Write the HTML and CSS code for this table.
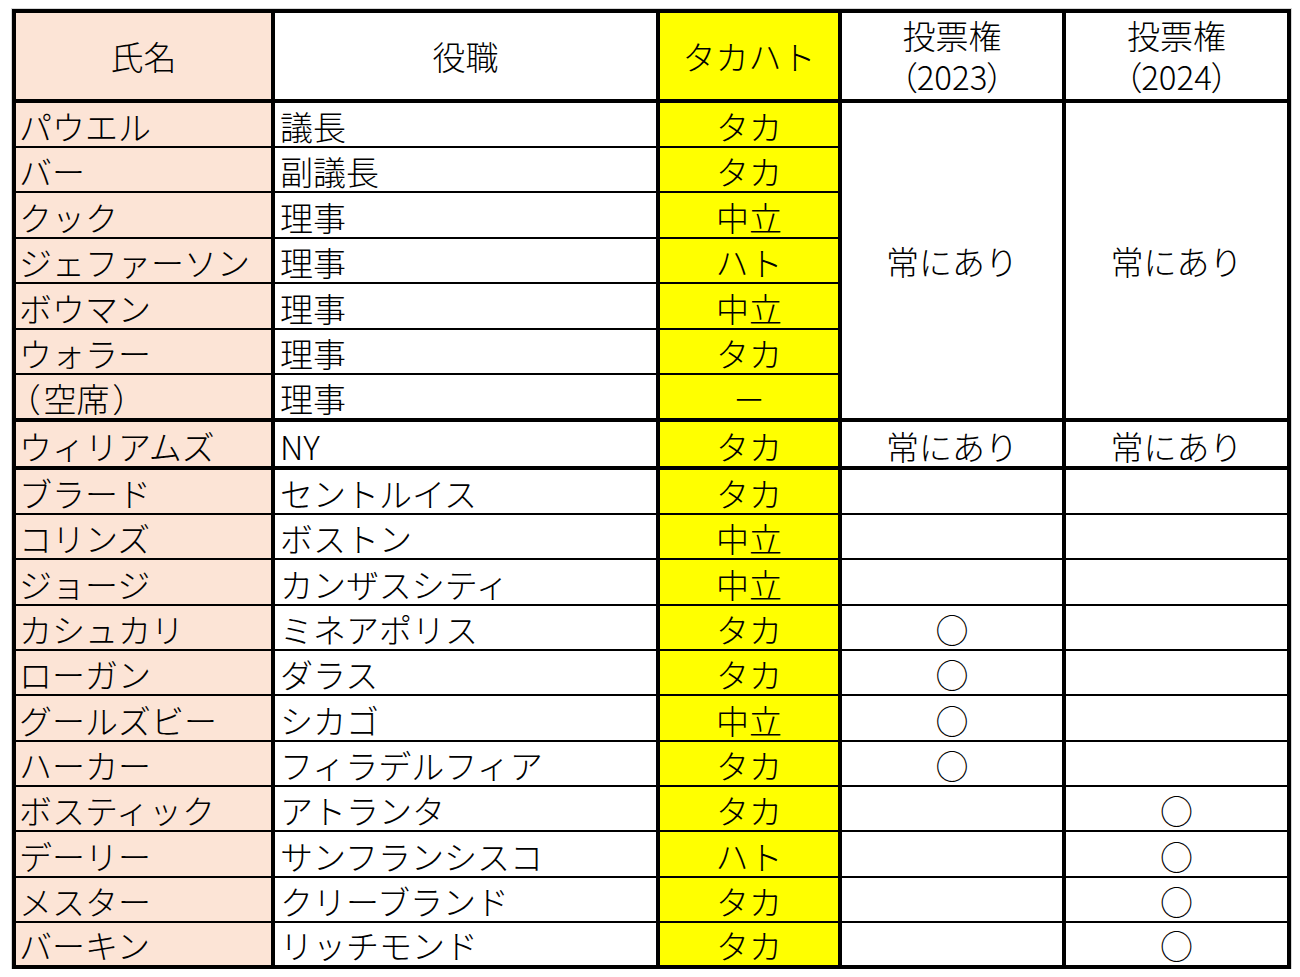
FILE: index.html
```html
<!DOCTYPE html>
<html lang="ja">
<head>
<meta charset="utf-8">
<title>FOMC</title>
<link rel="stylesheet" href="styles.css">
</head>
<body>
<div class="sheet">
  <div class="grid">
    <div class="cell name head">氏名</div>
    <div class="cell role head">役職</div>
    <div class="cell stance head">タカハト</div>
    <div class="cell vote head"><span>投票権</span><span><span class="p">（</span>2023<span class="p">）</span></span></div>
    <div class="cell vote head"><span>投票権</span><span><span class="p">（</span>2024<span class="p">）</span></span></div>

    <div class="cell name">パウエル</div>
    <div class="cell role">議長</div>
    <div class="cell stance">タカ</div>
    <div class="cell vote merged">常にあり</div>
    <div class="cell vote merged">常にあり</div>

    <div class="cell name">バー</div>
    <div class="cell role">副議長</div>
    <div class="cell stance">タカ</div>

    <div class="cell name">クック</div>
    <div class="cell role">理事</div>
    <div class="cell stance">中立</div>

    <div class="cell name">ジェファーソン</div>
    <div class="cell role">理事</div>
    <div class="cell stance">ハト</div>

    <div class="cell name">ボウマン</div>
    <div class="cell role">理事</div>
    <div class="cell stance">中立</div>

    <div class="cell name">ウォラー</div>
    <div class="cell role">理事</div>
    <div class="cell stance">タカ</div>

    <div class="cell name end"><span class="p wide">（</span>空席<span class="p wide">）</span></div>
    <div class="cell role end">理事</div>
    <div class="cell stance end">－</div>

    <div class="cell name end">ウィリアムズ</div>
    <div class="cell role end">NY</div>
    <div class="cell stance end">タカ</div>
    <div class="cell vote end">常にあり</div>
    <div class="cell vote end">常にあり</div>

    <div class="cell name">ブラード</div>
    <div class="cell role">セントルイス</div>
    <div class="cell stance">タカ</div>
    <div class="cell vote"></div>
    <div class="cell vote"></div>

    <div class="cell name">コリンズ</div>
    <div class="cell role">ボストン</div>
    <div class="cell stance">中立</div>
    <div class="cell vote"></div>
    <div class="cell vote"></div>

    <div class="cell name">ジョージ</div>
    <div class="cell role">カンザスシティ</div>
    <div class="cell stance">中立</div>
    <div class="cell vote"></div>
    <div class="cell vote"></div>

    <div class="cell name">カシュカリ</div>
    <div class="cell role">ミネアポリス</div>
    <div class="cell stance">タカ</div>
    <div class="cell vote">○</div>
    <div class="cell vote"></div>

    <div class="cell name">ローガン</div>
    <div class="cell role">ダラス</div>
    <div class="cell stance">タカ</div>
    <div class="cell vote">○</div>
    <div class="cell vote"></div>

    <div class="cell name">グールズビー</div>
    <div class="cell role">シカゴ</div>
    <div class="cell stance">中立</div>
    <div class="cell vote">○</div>
    <div class="cell vote"></div>

    <div class="cell name">ハーカー</div>
    <div class="cell role">フィラデルフィア</div>
    <div class="cell stance">タカ</div>
    <div class="cell vote">○</div>
    <div class="cell vote"></div>

    <div class="cell name">ボスティック</div>
    <div class="cell role">アトランタ</div>
    <div class="cell stance">タカ</div>
    <div class="cell vote"></div>
    <div class="cell vote">○</div>

    <div class="cell name">デーリー</div>
    <div class="cell role">サンフランシスコ</div>
    <div class="cell stance">ハト</div>
    <div class="cell vote"></div>
    <div class="cell vote">○</div>

    <div class="cell name">メスター</div>
    <div class="cell role">クリーブランド</div>
    <div class="cell stance">タカ</div>
    <div class="cell vote"></div>
    <div class="cell vote">○</div>

    <div class="cell name last">バーキン</div>
    <div class="cell role last">リッチモンド</div>
    <div class="cell stance last">タカ</div>
    <div class="cell vote last"></div>
    <div class="cell vote last">○</div>
  </div>
</div>
</body>
</html>
```

FILE: styles.css
```css
html, body {
  margin: 0;
  padding: 0;
  background: #ffffff;
}

body {
  font-family: "Noto Sans CJK JP", "Noto Sans", sans-serif;
  font-size: 33px;
  color: #000000;
}

.sheet {
  padding: 9px 0 0 12px;
}

.grid {
  display: grid;
  width: 1279px;
  box-sizing: border-box;
  grid-template-columns: 259px 385px 182px 224px 225px;
  grid-template-rows: 90px 45px 45px 46px 45px 46px 45px 47px 48px 45px 45px 46px 45px 45px 46px 45px 45px 46px 45px 46px;
  border-top: 4px solid #000;
  border-left: 4px solid #000;
  box-shadow: 0 0 0 1px #d6d6d6;
}

.cell {
  box-sizing: border-box;
  border-right: 4px solid #000;
  border-bottom: 2px solid #000;
  display: flex;
  align-items: flex-end;
  line-height: 40px;
  white-space: nowrap;
  font-weight: 300;
}

.cell.end,
.cell.last,
.cell.head,
.cell.merged {
  border-bottom-width: 4px;
}

.name {
  background: #fce4d6;
  padding-left: 3px;
}

.role {
  background: #ffffff;
  padding-left: 5px;
}

.stance {
  background: #ffff00;
  justify-content: center;
}

.vote {
  background: #ffffff;
  justify-content: center;
}

.head {
  align-items: center;
  justify-content: center;
  padding: 0;
}

.vote.head {
  flex-direction: column;
  line-height: 41px;
}

.merged {
  grid-row: span 7;
  align-items: center;
}

.p {
  font-feature-settings: "palt";
}

.p.wide {
  padding: 0 4px;
}
```
